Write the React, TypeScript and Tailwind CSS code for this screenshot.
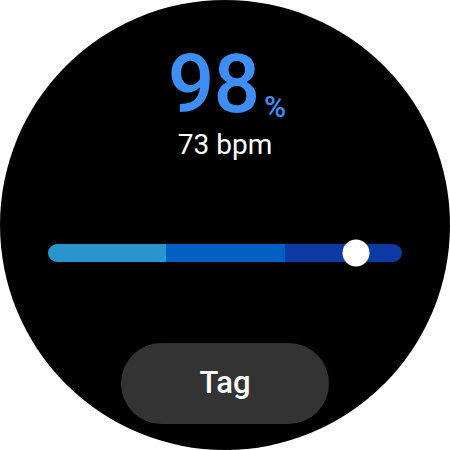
import React from 'react';

const App: React.FC = () => {
  const knob = 87; // percent along the bar
  return (
    <div className="w-[450px] h-[450px] bg-white">
      <div className="w-[450px] h-[450px] rounded-full bg-black flex flex-col items-center overflow-hidden font-['Roboto',sans-serif]">
        {/* Reading */}
        <div className="mt-[43px] ml-[4px] h-[82px] flex items-end text-[#3e8ef7]">
          <span className="block h-[82px] text-[82px] font-medium tracking-[-1px] leading-[82px]">98</span>
          <span className="block text-[30px] font-medium ml-[5px] mb-[3px] leading-none">%</span>
        </div>
        <div className="mt-[6px] h-[28px] text-white text-[28px] leading-[28px]">73 bpm</div>

        {/* Slider */}
        <div className="relative mt-[85px] w-[354px] h-[18px] flex">
          <div className="flex w-full h-full rounded-full overflow-hidden">
            <div className="w-[118px] bg-[#2995cf]" />
            <div className="w-[119px] bg-[#025fc3]" />
            <div className="flex-1 bg-[#0b3aa3]" />
          </div>
          <div
            className="absolute top-1/2 w-[27px] h-[27px] -translate-x-1/2 -translate-y-1/2 rounded-full bg-white"
            style={{ left: `${knob}%` }}
          />
        </div>

        {/* Button */}
        <button className="mt-[81px] w-[208px] h-[81px] rounded-full bg-[#333333] text-white text-[31px] font-medium">
          Tag
        </button>
      </div>
    </div>
  );
};

export default App;
